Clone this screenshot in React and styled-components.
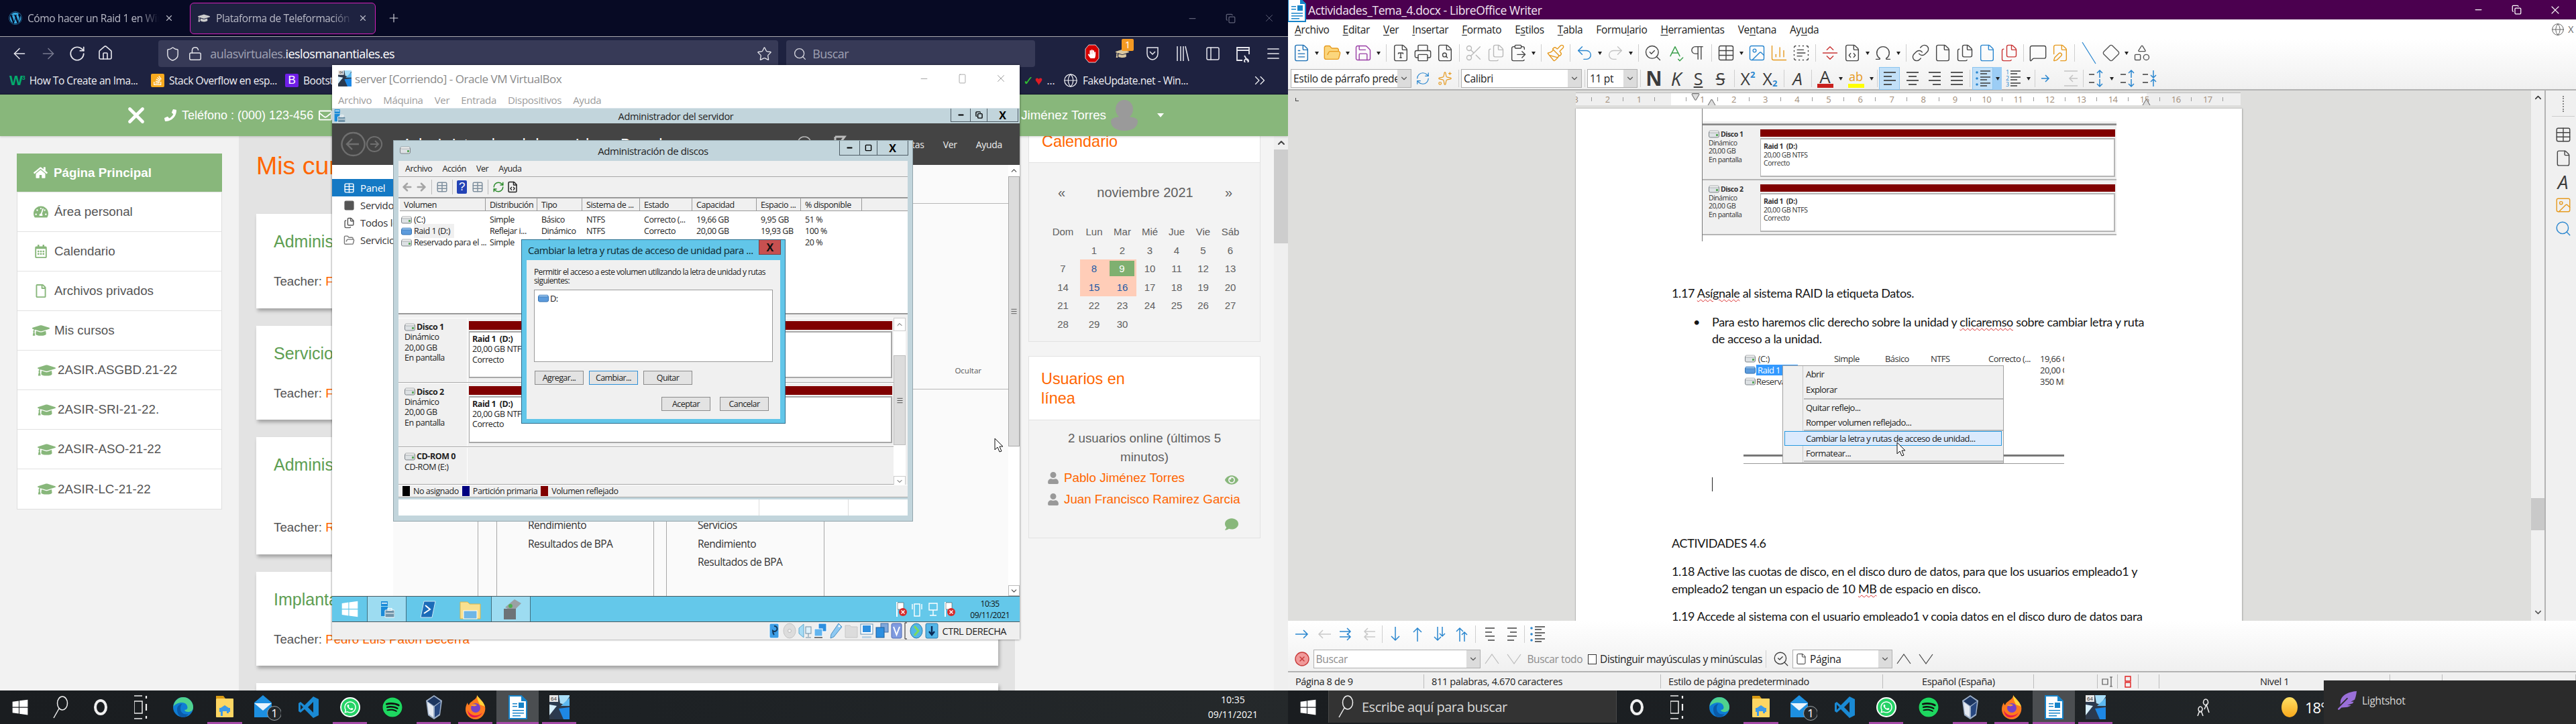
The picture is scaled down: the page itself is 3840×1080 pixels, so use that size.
import React from 'react';
import styled, { createGlobalStyle, css } from 'styled-components';
import {
  ArrowLeft, ArrowRight, RotateCw, Home, Shield, LockOpen, Star, Search, X, Plus, Minus, Square, Copy,
  ChevronsRight, Menu, PanelLeft, Globe, ChevronDown, ChevronUp, FileText, FolderOpen, Save, FileType, Printer,
  FileSearch, Scissors, Files, ClipboardPaste, Paintbrush, Undo2, Redo2, SearchCheck, SpellCheck, Pilcrow,
  Table, Image, ChartColumn, TextSelect, SeparatorHorizontal, FileCode, Omega, Link, File, MessageSquare, FilePen,
  Diamond, Shapes, RefreshCw, Sparkles, XCircle, Triangle,
} from 'lucide-react';
import {
  FaWindows, FaHome, FaTachometerAlt, FaRegCalendarAlt, FaRegFile, FaGraduationCap, FaPhoneAlt, FaRegEnvelope,
  FaUser, FaEye, FaComment, FaWhatsapp, FaSpotify, FaWordpress, FaStackOverflow, FaHandPaper, FaFeatherAlt,
} from 'react-icons/fa';

const UI = `"Open Sans", "Noto Sans", sans-serif`;
const WEB = `"Liberation Sans", Arial, sans-serif`;

const Global = createGlobalStyle`
  html, body { margin: 0; padding: 0; width: 3840px; height: 1080px; overflow: hidden; background: #000; }
  * { box-sizing: border-box; }
  svg { display: block; flex-shrink: 0; }
`;

const Desktop = styled.div`
  display: grid;
  grid-template-columns: 1920px 1920px;
  height: 1080px;
  font-family: ${UI};
`;

const Screen = styled.div`
  position: relative;
  display: flex;
  flex-direction: column;
  height: 1080px;
  overflow: hidden;
`;

/* ---------- Windows taskbar ---------- */

const TaskbarRoot = styled.div`
  height: 50px;
  flex-shrink: 0;
  display: flex;
  align-items: stretch;
  background: linear-gradient(90deg, #1a1d20 0%, #1d2124 50%, #25292b 100%);
  color: #fff;
`;

const TaskSlot = styled.div`
  position: relative;
  width: ${p => p.$w || 60}px;
  display: flex;
  align-items: center;
  justify-content: center;
  background: ${p => (p.$focus ? '#4b4e51' : 'transparent')};
  &::after {
    content: '';
    display: ${p => (p.$open ? 'block' : 'none')};
    position: absolute;
    bottom: 0;
    height: 3px;
    left: ${p => (p.$focus ? 0 : 5)}px;
    right: ${p => (p.$focus ? 0 : 6)}px;
    background: #a54ba8;
  }
`;

const SearchBox = styled.div`
  width: 430px;
  display: flex;
  align-items: center;
  gap: 12px;
  padding-left: 13px;
  margin-bottom: 2px;
  background: #333;
  border: 1px solid #4a4a4a;
  border-width: 0 1px;
  color: #d8d8d8;
  font-size: 20px;
  letter-spacing: -0.5px;
`;

const AppsRow = styled.div`
  display: flex;
  margin-left: 2px;
`;

const Clock = styled.div`
  margin-left: auto;
  margin-right: 45px;
  display: flex;
  flex-direction: column;
  justify-content: center;
  align-items: center;
  gap: 4px;
  font-size: 14px;
  line-height: 18px;
`;

const TaskTray = styled.div`
  display: flex;
  align-items: center;
  font-size: 22px;
  letter-spacing: -1px;
`;

const CircleIcon = styled.span`
  display: flex;
  width: 30px;
  height: 30px;
  border-radius: 50%;
  align-items: center;
  justify-content: center;
  background: ${p => p.$bg};
  border: ${p => p.$ring || 'none'};
  color: ${p => p.$fg};
  font-size: 20px;
`;

const EdgeIcon = () => (
  <svg width="30" height="30" viewBox="0 0 30 30">
    <circle cx="15" cy="15" r="15" fill="#0f7dd4" />
    <path d="M15 0a15 15 0 0 1 15 15c0 5-3.500 7-7.500 7-3 0-5-1-5.500-3 2.500 0 4.500-1 4.500-3.500C21.500 11 18 8 13 8 8 8 3 10.500 .5 14 1.500 6 7.500 0 15 0z" fill="#4fd28e" />
    <path d="M6 18c0-5 4-8 7.500-8-2 2-2.500 4-2.500 7 0 6 5 10 12 8-2.500 3-5 5-8 5-6 0-9-6-9-12z" fill="#0b5aa8" />
  </svg>
);
const FolderIcon = () => (
  <svg width="28" height="34" viewBox="0 0 28 34">
    <path d="M1 0h11l3 4H1z" fill="#d89a14" />
    <rect x="1" y="4" width="26" height="28" rx="1" fill="#fdd663" />
    <path d="M8 18l6-4 6 4v8h-4v-4h-4v8H8z" fill="#3d9ae8" />
    <rect x="6" y="18" width="16" height="6" fill="#3d9ae8" />
    <rect x="11" y="23" width="6" height="9" fill="#fdd663" />
  </svg>
);
const MailIcon = () => (
  <svg width="42" height="40" viewBox="0 0 42 40">
    <path d="M2 13L15 2l13 11v22H2z" fill="#1d8fe0" />
    <path d="M2 14h26L15 25z" fill="#e8f4fd" />
    <circle cx="32" cy="29" r="10.500" fill="#23272a" stroke="#9aa0a4" />
    <text x="32" y="35" textAnchor="middle" fontSize="17" fill="#fff" fontFamily="Open Sans">1</text>
  </svg>
);
const CodeIcon = () => (
  <svg width="30" height="32" viewBox="0 0 30 32">
    <path d="M22 0l8 4v24l-8 4-13-13-6 5-3-2v-12l3-2 6 5z" fill="#1a8ad4" />
    <path d="M22 8l-8 8 8 8z" fill="#1c2024" />
    <path d="M3 12l4 4-4 4z" fill="#1c2024" />
  </svg>
);
const VBoxIcon = () => (
  <svg width="26" height="38" viewBox="0 0 26 38">
    <path d="M13 1l12 8-3 22-9 6-9-6L1 9z" fill="#9fb1c9" />
    <path d="M13 3l10 7-10 7L3 10z" fill="#1d3660" />
    <path d="M3 11l9 7v16l-7-5z" fill="#e4e9f1" />
    <path d="M23 11l-9 7v16l7-5z" fill="#27477f" />
  </svg>
);
const FirefoxIcon = () => (
  <svg width="30" height="36" viewBox="0 0 30 36">
    <path d="M17 0c2 4 9 8 12 17 2 9-5 19-14 19S0 29 0 21c0-3 1-7 3-10 0 2 1 3 2 4 1-4 4-5 6-7 3-2 6-4 6-8z" fill="#ff7a1f" />
    <path d="M17 0c2 4 9 8 12 17l-8-3c-1-3-4-7-4-14z" fill="#ffd43a" />
    <path d="M3 22c3 8 14 12 22 4-3 6-11 9-17 6-3-2-5-6-5-10z" fill="#e5184f" />
    <circle cx="15" cy="19" r="7" fill="#7642c9" />
    <path d="M8 15c3-2 7-2 9 0-2 1-4 2-6 1-1 0-2 0-3-1z" fill="#ff9d2b" />
  </svg>
);
const WriterIcon = () => (
  <svg width="28" height="36" viewBox="0 0 28 36">
    <path d="M1 1h18l8 8v26H1z" fill="#fff" stroke="#1683c9" strokeWidth="2" />
    <path d="M19 0l9 9h-9z" fill="#1683c9" />
    <rect x="6" y="12" width="7" height="1.500" fill="#1683c9" />
    <rect x="6" y="16" width="7" height="1.500" fill="#1683c9" />
    <rect x="15" y="11" width="8" height="8" fill="#1683c9" />
    <rect x="6" y="22" width="17" height="1.500" fill="#1683c9" />
    <rect x="6" y="26" width="17" height="1.500" fill="#1683c9" />
    <rect x="6" y="30" width="12" height="1.500" fill="#1683c9" />
  </svg>
);
const VmIcon = ({ size = 30 }) => (
  <svg width={size} height={size * 1.2} viewBox="0 0 30 36">
    <rect width="30" height="36" fill="#2f3a4a" />
    <path d="M0 10h14l-1 6 8 20H8z" fill="#2b3a4f" />
    <path d="M14 0l2 12 6 2 8-12V0z" fill="#a8def8" />
    <path d="M17 16l13-12v12l-13 0z" fill="#5cb8f0" />
    <path d="M14 20l16-2v18h-9z" fill="#1e88e5" />
    <path d="M0 14l11 2-11 14z" fill="#d7effc" />
    <rect width="13" height="10" fill="#e6e6e6" />
    <text x="6.500" y="8" textAnchor="middle" fontSize="8" fill="#333" fontFamily="Liberation Sans">64</text>
  </svg>
);
const CortanaRing = styled.span`
  width: 20px;
  height: 24px;
  border: 4px solid #f0f0f0;
  border-radius: 50%;
`;
const TaskViewIcon = () => (
  <svg width="20" height="36" viewBox="0 0 20 36" stroke="#f0f0f0" fill="none" strokeWidth="1.500">
    <path d="M0 1h12M0 35h12M0 9h12v18H0z" />
    <path d="M18 1v4M18 13v10M18 31v4" strokeWidth="2.200" />
  </svg>
);
const MagnifierIcon = () => (
  <svg width="24" height="34" viewBox="0 0 24 34" fill="none" stroke="#f0f0f0" strokeWidth="1.500">
    <ellipse cx="15" cy="11" rx="7.500" ry="10" />
    <path d="M10 19L2 33" />
  </svg>
);

const AppSlots = () => {
  const apps = [
    [<EdgeIcon />, false],
    [<FolderIcon />, true],
    [<MailIcon />, false],
    [<CodeIcon />, false],
    [<CircleIcon $bg="#25d366" $fg="#fff" $ring="2px solid #fff"><FaWhatsapp /></CircleIcon>, true],
    [<CircleIcon $bg="#111" $fg="#1ed760"><FaSpotify size={30} /></CircleIcon>, false],
    [<VBoxIcon />, true],
    [<FirefoxIcon />, true],
    [<WriterIcon />, true, true],
    [<VmIcon />, true],
  ];
  return (
    <AppsRow>
      {apps.map(([icon, open, focus], i) => (
        <TaskSlot key={i} $w={62.3} $open={open} $focus={focus}>{icon}</TaskSlot>
      ))}
    </AppsRow>
  );
};

/* ---------- Firefox ---------- */

const Browser = styled.div`
  flex: 1;
  display: flex;
  flex-direction: column;
  min-height: 0;
  background: #1e2240;
`;
const TabBar = styled.div`
  height: 55px;
  display: flex;
  align-items: center;
  background: #070a24;
  border-bottom: 1px solid #a9a9ad;
  flex-shrink: 0;
  color: #b9bac6;
`;
const Tab = styled.div`
  display: flex;
  align-items: center;
  height: 47px;
  width: ${p => (p.$active ? 277 : 270)}px;
  padding-left: ${p => (p.$active ? 10 : 13)}px;
  padding-right: 11px;
  gap: 8px;
  font-size: 15.500px;
  letter-spacing: -0.4px;
  white-space: nowrap;
  ${p => p.$active && css`
    margin-left: 13px;
    background: #1e2240;
    border: 1px solid #d31fba;
    border-radius: 6px;
  `}
`;
const TabLabel = styled.span`
  flex: 1;
  overflow: hidden;
  -webkit-mask-image: linear-gradient(90deg, #000 85%, transparent);
`;
const PlainIcon = styled.span`
  display: flex;
  width: ${p => p.$w || 20}px;
  justify-content: center;
  align-items: center;
  color: ${p => p.$c || 'inherit'};
  flex-shrink: 0;
`;
const NewTab = styled.span`
  margin-left: 17px;
  color: #d4d5dd;
  display: flex;
`;
const WinControls = styled.div`
  margin-left: auto;
  display: flex;
  align-items: center;
  color: ${p => p.$c || '#5f6177'};
`;
const WinControl = styled.span`
  width: 57px;
  display: flex;
  justify-content: center;
`;
const NavBar = styled.div`
  height: 45px;
  padding-top: 5px;
  display: flex;
  align-items: center;
  color: #e8e8ee;
  flex-shrink: 0;
`;
const NavBtns = styled.div`
  display: flex;
  width: 237px;
  padding-left: 16px;
  gap: 17px;
`;
const UrlField = styled.div`
  height: 40px;
  width: ${p => p.$w}px;
  margin-right: 12px;
  background: #373a57;
  border-radius: 4px;
  display: flex;
  align-items: center;
  padding-left: 10px;
  gap: ${p => p.$gap || 10}px;
  font-size: 18px;
  letter-spacing: -0.55px;
  color: #9fa1b3;
`;
const UrlHost = styled.span`
  color: #fff;
`;
const EndIcon = styled.span`
  margin-left: auto;
  margin-right: 9px;
  display: flex;
`;
const FfTools = styled.div`
  display: flex;
  margin-left: 50px;
  gap: 0;
`;
const FfTool = styled.span`
  position: relative;
  width: 45px;
  display: flex;
  justify-content: center;
  align-items: center;
`;
const Badge = styled.span`
  position: absolute;
  top: -8px;
  right: 5px;
  width: 18px;
  height: 18px;
  background: #f59a23;
  color: #fff;
  text-align: center;
  border-radius: 2px;
  font-size: 14px;
  line-height: 18px;
`;
const BookmarksBar = styled.div`
  height: 41px;
  display: flex;
  align-items: center;
  padding-left: 14px;
  color: #f0f0f4;
  font-size: 15.500px;
  letter-spacing: -0.45px;
  flex-shrink: 0;
  border-bottom: 1px solid #10132b;
  white-space: nowrap;
`;
const Bookmark = styled.span`
  display: flex;
  align-items: center;
  gap: 7px;
  width: ${p => p.$w}px;
  flex-shrink: 0;
`;
const W3 = styled.span`
  color: #04aa6d;
  font-family: ${WEB};
  font-weight: 700;
  font-size: 21px;
  letter-spacing: -1px;
`;
const Square20 = styled.span`
  width: 20px;
  height: 20px;
  display: flex;
  align-items: center;
  justify-content: center;
  border-radius: 2px;
  background: ${p => p.$bg};
  color: ${p => p.$fg};
  font-family: ${WEB};
  font-size: 17px;
`;

const WebHeader = styled.div`
  position: relative;
  z-index: 2;
  height: 62px;
  flex-shrink: 0;
  background: #88b77b;
  display: flex;
  align-items: center;
  color: #fff;
  font-family: ${WEB};
  font-size: 18px;
  padding-left: 184px;
  padding-right: 21px;
  box-shadow: 0 1px 3px rgba(0, 0, 0, .18);
`;
const HeaderPhone = styled.span`
  margin-left: 23px;
  display: flex;
  align-items: center;
  gap: 8px;
`;
const HeaderUser = styled.span`
  margin-left: auto;
  display: flex;
  align-items: center;
  font-size: 18.750px;
`;
const Caret = styled.span`
  margin-left: 27px;
  margin-right: 164px;
  border: 5px solid transparent;
  border-top: 6px solid #fff;
  margin-top: 5px;
`;
const Page = styled.div`
  flex: 1;
  min-height: 0;
  display: grid;
  grid-template-columns: 356px 1157px 386px 21px;
  font-family: ${WEB};
  font-size: 18.750px;
`;
const SideCol = styled.div`
  background: #f2f2f2;
  padding: 26px 25px;
`;
const SideList = styled.div`
  width: 306px;
  border: 1px solid #dfdfdf;
  border-top: none;
  background: #fff;
`;
const SideRow = styled.div`
  height: ${p => (p.$active ? 58 : 59)}px;
  display: flex;
  align-items: center;
  gap: ${p => (p.$sub ? 2 : 5)}px;
  padding-left: ${p => (p.$sub ? 28 : 20)}px;
  color: ${p => (p.$active ? '#fff' : '#555')};
  font-weight: ${p => (p.$active ? 700 : 400)};
  background: ${p => (p.$active ? '#88b77b' : '#fff')};
  border-bottom: 1px solid #e2e2e2;
  margin: ${p => (p.$active ? '0 -1px' : '0')};
  &:last-child { border-bottom: none; }
`;
const MainCol = styled.div`
  background: #e3e3e3;
  padding: 21px 25px 0 26px;
  overflow: hidden;
`;
const Heading = styled.h1`
  margin: 0 0 49px;
  font-size: 37.500px;
  line-height: 46px;
  font-weight: 400;
  color: #ff6600;
`;
const CourseCards = styled.div`
  display: flex;
  flex-direction: column;
  gap: 26px;
`;
const Course = styled.div`
  background: #fff;
  padding: 24px 26px 27.500px;
  box-shadow: 2px 4px 5px rgba(0, 0, 0, .28);
  min-height: 140px;
  white-space: nowrap;
`;
const CourseTitle = styled.div`
  font-size: 25px;
  line-height: 34px;
  color: #5e9e52;
`;
const Teacher = styled.div`
  margin-top: ${p => p.$mt || 31}px;
  line-height: 24px;
  color: #555;
`;
const Orange = styled.span`
  color: #ff6600;
`;
const RightCol = styled.div`
  background: #f4f4f4;
  padding-left: 20px;
`;
const Block = styled.div`
  width: 346px;
  border: 1px solid #e2e2e2;
  border-top: ${p => (p.$first ? 'none' : '1px solid #e2e2e2')};
  margin-top: ${p => (p.$first ? 0 : 21)}px;
`;
const BlockHead = styled.div`
  background: #fff;
  height: ${p => p.$h}px;
  padding: ${p => p.$pad};
  font-size: 23.400px;
  line-height: ${p => p.$lh}px;
  color: #ff6600;
  border-bottom: 1px solid #e2e2e2;
`;
const BlockBody = styled.div`
  background: #f3f3f3;
  height: ${p => p.$h}px;
  color: #606060;
`;
const MonthRow = styled.div`
  height: 89px;
  display: flex;
  align-items: center;
  justify-content: space-between;
  padding: 0 41px 0 43px;
  font-size: 20px;
`;
const CalGrid = styled.div`
  margin-left: 25px;
  display: grid;
  grid-template-columns: 51px 42px 42px 40px 40px 39px 42px;
  grid-auto-rows: 27.500px;
  font-size: 15px;
  text-align: center;
`;
const DayCell = styled.div`
  display: flex;
  align-items: center;
  justify-content: center;
  background: ${p => (p.$event ? '#ffcdb8' : 'transparent')};
  color: ${p => (p.$event ? '#1d5aa6' : 'inherit')};
`;
const Today = styled.span`
  width: 37px;
  height: 23px;
  margin-left: -1px;
  margin-top: -1px;
  background: #7fb070;
  color: #fff;
  line-height: 23px;
`;
const OnlineText = styled.div`
  width: 300px;
  margin: 0 auto;
  padding-top: 13px;
  line-height: 28px;
  text-align: center;
`;
const UserRows = styled.div`
  margin-top: 1px;
  padding-left: 27px;
  padding-right: 32px;
`;
const UserRow = styled.div`
  height: 32px;
  display: flex;
  align-items: center;
  gap: 7px;
  color: #ff6600;
  white-space: nowrap;
`;
const RowEnd = styled.span`
  margin-left: auto;
  margin-top: 6px;
  color: #88b77b;
  display: flex;
`;
const ChatLine = styled.div`
  display: flex;
  justify-content: flex-end;
  margin-top: 11px;
  color: #88b77b;
`;
const PageScroll = styled.div`
  background: #efefef;
  display: flex;
  flex-direction: column;
  align-items: center;
`;
const PageThumb = styled.div`
  width: 100%;
  height: 140px;
  margin-top: 0;
  background: #cdcdcd;
`;
const ArrowBox = styled.div`
  height: ${p => p.$h || 18}px;
  width: 100%;
  background: ${p => p.$bg || '#fff'};
  border: ${p => p.$b || 'none'};
  display: flex;
  align-items: center;
  justify-content: center;
  color: ${p => p.$c || '#444'};
  flex-shrink: 0;
`;

/* ---------- VirtualBox window ---------- */

const VBoxWindow = styled.div`
  position: absolute;
  z-index: 3;
  left: 495px;
  top: 97px;
  width: 1025px;
  height: 857px;
  background: #fff;
  display: flex;
  flex-direction: column;
  box-shadow: 0 0 3px rgba(0, 0, 0, .55);
`;
const VBoxTitle = styled.div`
  height: 40px;
  display: flex;
  align-items: center;
  padding-left: 9px;
  gap: 5px;
  color: #8a8a8a;
  font-size: 17px;
  letter-spacing: -0.45px;
  flex-shrink: 0;
`;
const VBoxMenu = styled.div`
  height: 24px;
  display: flex;
  align-items: center;
  padding-left: 9px;
  gap: 17px;
  color: #9c9c9c;
  font-size: 15px;
  letter-spacing: -0.3px;
  flex-shrink: 0;
`;
const VmScreen = styled.div`
  position: relative;
  height: 767px;
  display: flex;
  flex-direction: column;
  background: #fff;
  flex-shrink: 0;
`;
const SmTitle = styled.div`
  position: relative;
  height: 23px;
  background: #c2d5dc;
  display: flex;
  align-items: center;
  justify-content: center;
  font-size: 14.500px;
  letter-spacing: -0.35px;
  color: #222;
  flex-shrink: 0;
  border-top: 1px solid #dbe6ea;
`;
const TitleIcon = styled.span`
  position: absolute;
  left: 2px;
  top: 0;
`;
const ChromeButtons = styled.div`
  position: absolute;
  top: 0;
  right: ${p => p.$r}px;
  display: flex;
  height: ${p => p.$h}px;
  background: #c2d5dc;
  border: 1px solid #4f5d66;
  border-top: none;
`;
const ChromeButton = styled.span`
  width: ${p => p.$w}px;
  display: flex;
  align-items: center;
  justify-content: center;
  color: #000;
  font-weight: 700;
  font-size: 16px;
  border-left: ${p => (p.$first ? 'none' : '1px solid #4f5d66')};
`;
const SmDark = styled.div`
  height: 62px;
  background: #444;
  display: flex;
  align-items: center;
  color: #ececec;
  font-size: 14px;
  letter-spacing: -0.3px;
  padding-left: 13px;
  flex-shrink: 0;
`;
const Crumb = styled.span`
  margin-left: 28px;
  font-size: 25px;
  color: #fff;
  white-space: nowrap;
`;
const SmMenuEnd = styled.span`
  margin-left: auto;
  display: flex;
  align-items: center;
  gap: 28px;
  padding-right: 26px;
`;
const SmBody = styled.div`
  flex: 1;
  min-height: 0;
  display: flex;
  font-size: 15px;
  color: #333;
`;
const SmSide = styled.div`
  width: 91px;
  padding-top: 21px;
  flex-shrink: 0;
  overflow: hidden;
  letter-spacing: -0.3px;
`;
const SmSideRow = styled.div`
  height: 26px;
  display: flex;
  align-items: center;
  gap: 8px;
  padding-left: 17px;
  white-space: nowrap;
  background: ${p => (p.$active ? '#1479c4' : 'transparent')};
  color: ${p => (p.$active ? '#fff' : '#333')};
`;
const SmMain = styled.div`
  flex: 1;
  background: #fafafa;
  display: flex;
  flex-direction: column;
`;
const QuickStart = styled.div`
  margin-top: 57px;
  height: 278px;
  border-top: 1px solid #b8b8b8;
  border-bottom: 1px solid #b8b8b8;
  display: flex;
  align-items: flex-end;
  justify-content: flex-end;
  padding: 0 40px 20px 0;
  font-size: 11.500px;
  color: #555;
`;
const TileRow = styled.div`
  flex: 1;
  display: flex;
  padding-left: 126px;
  margin-top: 10px;
`;
const TileGutter = styled.div`
  width: 28px;
  border-left: 1px solid #a8a8a8;
`;
const Tile = styled.div`
  width: ${p => p.$w}px;
  margin-right: 18px;
  border: 1px solid #a8a8a8;
  border-width: 0 1px;
  padding: 179px 0 0 46px;
  line-height: 27.700px;
  letter-spacing: -0.5px;
  color: #333;
  font-size: 15.500px;
`;
const SmScroll = styled.div`
  width: 17px;
  display: flex;
  flex-direction: column;
  flex-shrink: 0;
  background: #fff;
`;
const SmThumb = styled.div`
  height: 403px;
  background: #dcdcdc;
  border: 1px solid #a8a8a8;
  margin-bottom: auto;
  display: flex;
  align-items: center;
  justify-content: center;
  color: #555;
`;
const VmTaskbar = styled.div`
  height: 39px;
  background: #64c8ea;
  border-top: 1px solid #4a5a60;
  border-bottom: 1px solid #4a5a60;
  display: flex;
  align-items: stretch;
  flex-shrink: 0;
  color: #111;
`;
const VmSlot = styled.div`
  width: ${p => p.$w}px;
  display: flex;
  align-items: center;
  justify-content: center;
  background: ${p => (p.$on ? '#9ddcf1' : 'transparent')};
  border: ${p => (p.$on ? '1px solid #3f6f80' : 'none')};
  border-width: 0 1px;
  color: #fff;
  font-size: 27px;
`;
const VmTray = styled.div`
  margin-left: auto;
  display: flex;
  align-items: center;
  gap: 6px;
  padding-right: 15px;
`;
const VmClock = styled.div`
  margin-left: 16px;
  display: flex;
  flex-direction: column;
  align-items: center;
  font-size: 12px;
  line-height: 17px;
  letter-spacing: -0.5px;
`;
const VBoxStatus = styled.div`
  flex: 1;
  background: #efefef;
  display: flex;
  align-items: center;
  justify-content: flex-end;
  gap: 3px;
  padding-right: 20px;
  font-size: 14.500px;
  letter-spacing: -0.55px;
  color: #222;
`;
const StatusText = styled.span`
  margin-left: 3px;
`;

/* ---------- Disk management ---------- */

const DiskWindow = styled.div`
  position: absolute;
  left: 91px;
  top: 48px;
  width: 775px;
  height: 569px;
  background: #c2d5dc;
  padding: 0 7px 8px;
  display: flex;
  flex-direction: column;
  border: 1px solid #93a6ad;
  font-size: 12.500px;
  letter-spacing: -0.45px;
  color: #222;
`;
const DiskTitle = styled.div`
  position: relative;
  height: 30px;
  flex-shrink: 0;
  display: flex;
  align-items: center;
  justify-content: center;
  font-size: 15px;
  letter-spacing: -0.4px;
`;
const DiskMenu = styled.div`
  height: 24px;
  flex-shrink: 0;
  display: flex;
  align-items: center;
  gap: 15px;
  padding-left: 10px;
  background: #f0f0f0;
  border-bottom: 1px solid #a8a8a8;
`;
const DiskTools = styled.div`
  height: 30px;
  flex-shrink: 0;
  display: flex;
  align-items: center;
  padding-left: 4px;
  gap: 3px;
  background: #f0f0f0;
`;
const ToolSep = styled.span`
  width: 1px;
  height: 22px;
  margin: 0 3px;
  background: #bbb;
`;
const VolumeList = styled.div`
  height: 175px;
  flex-shrink: 0;
  background: #fff;
  padding-left: 2px;
  border-top: 2px solid #999;
  border-bottom: 2px solid #999;
`;
const VolumeGrid = styled.div`
  display: grid;
  grid-template-columns: 128px 77px 67px 86px 78px 96px 66px 91px 1fr;
  height: ${p => p.$h}px;
  align-items: center;
  white-space: nowrap;
  ${p => p.$head && css`
    background: #f0f0f0;
    border-bottom: 1px solid #999;
    margin-bottom: 2px;
  `}
`;
const VolHead = styled.span`
  height: 100%;
  padding-left: 6px;
  display: flex;
  align-items: center;
  border-right: 1px solid #999;
`;
const VolCell = styled.span`
  padding-left: ${p => (p.$first ? 2 : 6)}px;
  display: flex;
  align-items: center;
  gap: ${p => (p.$first ? 3 : 0)}px;
`;
const VolName = styled.span`
  background: ${p => (p.$sel ? '#f0f0f0' : 'transparent')};
  padding: 2px 6px 2px 0;
`;
const DiskStack = styled.div`
  flex: 1;
  min-height: 0;
  display: flex;
  background: #f0f0f0;
  padding-top: 5px;
`;
const DiskRows = styled.div`
  flex: 1;
  display: flex;
  flex-direction: column;
`;
const DiskRowWrap = styled.div`
  height: ${p => p.$h}px;
  display: flex;
  border-bottom: 1px solid #a8a8a8;
  border-top: 1px solid #fff;
`;
const DiskLabel = styled.div`
  width: 103px;
  flex-shrink: 0;
  padding: 5px 0 0 9px;
  line-height: 15.300px;
  border-right: 1px solid #fff;
`;
const DiskName = styled.div`
  display: flex;
  align-items: center;
  gap: 2px;
  font-weight: 700;
`;
const DiskParts = styled.div`
  flex: 1;
  padding: 4px 2px 0 2px;
`;
const RedBar = styled.div`
  height: ${p => p.$h || 13}px;
  background: #800000;
`;
const PartBox = styled.div`
  height: ${p => p.$h || 70}px;
  margin-top: 2px;
  background: #fff;
  border: 1px solid #a8a8a8;
  border-width: 2px 2px 2px 1px;
  padding: 2px 4px;
  line-height: 15.300px;
`;
const Bold = styled.div`
  font-weight: 700;
`;
const DiskScroll = styled.div`
  width: 18px;
  display: flex;
  flex-direction: column;
  background: #fff;
  margin-right: 3px;
`;
const LegendBar = styled.div`
  height: 19px;
  flex-shrink: 0;
  display: flex;
  align-items: center;
  gap: 5px;
  padding-left: 6px;
  background: #f0f0f0;
  border-top: 1px solid #fff;
  border-bottom: 1px solid #a8a8a8;
`;
const Swatch = styled.span`
  width: 11px;
  height: 15px;
  background: ${p => p.$c};
`;
const DiskStatusBar = styled.div`
  height: 24px;
  flex-shrink: 0;
  margin-top: 3px;
  display: grid;
  grid-template-columns: 538px 133px 1fr;
  background: #fff;
`;
const DiskStatusCell = styled.span`
  border-right: 1px solid #ddd;
`;

/* ---------- Dialog ---------- */

const Dialog = styled.div`
  position: absolute;
  left: 190px;
  top: 147px;
  width: 394px;
  height: 275px;
  background: #62c6e9;
  border: 1px solid #2d6f8f;
  padding: 0 7px 7px;
  display: flex;
  flex-direction: column;
  font-size: 12px;
  letter-spacing: -0.6px;
`;
const DialogTitle = styled.div`
  position: relative;
  height: 30px;
  flex-shrink: 0;
  display: flex;
  align-items: center;
  padding-left: 2px;
  font-size: 15px;
  letter-spacing: -0.48px;
  color: #10282f;
  white-space: nowrap;
`;
const DialogClose = styled.span`
  position: absolute;
  right: -1px;
  top: 0;
  width: 33px;
  height: 22px;
  background: #c75050;
  border: 1px solid #75454a;
  border-top: none;
  display: flex;
  align-items: center;
  justify-content: center;
  font-size: 16px;
  font-weight: 700;
  color: #111;
`;
const DialogBody = styled.div`
  flex: 1;
  background: #f0f0f0;
  padding: 11px 11px 12px;
  display: flex;
  flex-direction: column;
  line-height: 13px;
`;
const DialogList = styled.div`
  height: 108px;
  margin-top: 7px;
  background: #fff;
  border: 1px solid #9a9a9a;
  padding: 6px 5px;
  display: flex;
  align-items: flex-start;
  gap: 2px;
  font-size: 13px;
`;
const DialogButtons = styled.div`
  display: flex;
  gap: 8px;
  margin-top: ${p => p.$mt}px;
  justify-content: ${p => (p.$end ? 'flex-end' : 'flex-start')};
  padding: 0 ${p => (p.$end ? 6 : 0)}px 0 ${p => (p.$end ? 0 : 1)}px;
  ${p => p.$end && css`gap: 14px;`}
`;
const WinButton = styled.span`
  width: 73px;
  height: 21px;
  background: #e3e3e3;
  border: 1px solid ${p => (p.$focus ? '#2e8fd6' : '#8c8c8c')};
  display: flex;
  align-items: center;
  justify-content: center;
  font-size: 12.500px;
`;

/* ---------- Writer ---------- */

const Writer = styled.div`
  flex: 1;
  min-height: 0;
  display: flex;
  flex-direction: column;
  background: #fff;
`;
const WriterTitle = styled.div`
  height: 29px;
  flex-shrink: 0;
  background: #4b004f;
  color: #f2e6f2;
  display: flex;
  align-items: center;
  padding-left: 6px;
  gap: 6px;
  font-size: 17.500px;
  letter-spacing: -0.4px;
`;
const WriterMenu = styled.div`
  height: 29px;
  flex-shrink: 0;
  display: flex;
  align-items: center;
  padding-left: 10px;
  gap: 20px;
  font-size: 15.500px;
  letter-spacing: -0.35px;
  color: #1c1c1c;
`;
const Mnemonic = styled.span`
  text-decoration: underline;
  text-underline-offset: 2px;
`;
const MenuEnd = styled.span`
  margin-left: auto;
  margin-right: 4px;
  display: flex;
  gap: 5px;
  align-items: center;
  color: #666;
  font-size: 14px;
`;
const ToolbarBlock = styled.div`
  flex-shrink: 0;
  background: linear-gradient(#fff, #f0f0f0);
  border-bottom: 2px solid #b3b3b3;
`;
const ToolRow = styled.div`
  height: ${p => p.$h}px;
  display: flex;
  align-items: center;
  padding-left: ${p => p.$pad || 0}px;
`;
const Btn = styled.span`
  width: ${p => p.$w || 33}px;
  height: 34px;
  margin-left: ${p => p.$ml || 0}px;
  display: flex;
  align-items: center;
  justify-content: center;
  flex-shrink: 0;
  color: ${p => p.$c || '#3b3b3b'};
  ${p => p.$on && css`
    background: #c2e0f8;
    outline: 1px solid #8cc4ef;
    outline-offset: -1px;
  `}
`;
const Drop = styled.span`
  width: 13px;
  height: 34px;
  flex-shrink: 0;
  display: flex;
  align-items: center;
  justify-content: center;
  background: ${p => (p.$on ? '#9ccdf5' : 'transparent')};
  &::before {
    content: '';
    border: 3.500px solid transparent;
    border-top: 5px solid #222;
    margin-top: 4px;
  }
`;
const TSep = styled.span`
  width: ${p => p.$w || 10}px;
  height: 26px;
  flex-shrink: 0;
  display: flex;
  justify-content: center;
  &::before { content: ''; width: 1px; background: #cfcfcf; }
`;
const Combo = styled.span`
  width: ${p => p.$w}px;
  height: 28px;
  flex-shrink: 0;
  display: flex;
  align-items: center;
  background: #fff;
  border: 1.500px solid #b0b0b0;
  font-size: 15.500px;
  letter-spacing: -0.3px;
  padding-left: 3px;
  color: #222;
  overflow: hidden;
  white-space: nowrap;
`;
const ComboText = styled.span`
  flex: 1;
  overflow: hidden;
  display: flex;
  align-items: center;
  gap: 4px;
  color: ${p => p.$c || 'inherit'};
`;
const ComboArrow = styled.span`
  width: 20px;
  height: 100%;
  background: #dcdcdc;
  display: flex;
  align-items: center;
  justify-content: center;
  color: #555;
  flex-shrink: 0;
`;
const FormatLetter = styled.span`
  font-size: ${p => p.$s || 27}px;
  line-height: 30px;
  font-weight: ${p => p.$w || 400};
  font-style: ${p => (p.$i ? 'italic' : 'normal')};
  text-decoration: ${p => p.$d || 'none'};
  text-decoration-thickness: 1.500px;
  text-underline-offset: 2px;
  color: #3b3b3b;
`;
const Script = styled.span`
  color: #2a86cf;
  font-size: 13px;
  font-weight: 700;
  margin-top: ${p => (p.$up ? -12 : 14)}px;
`;
const ColorA = styled.span`
  position: relative;
  display: flex;
  flex-direction: column;
  align-items: center;
  font-size: ${p => p.$s || 22}px;
  line-height: 22px;
  color: ${p => p.$fg || '#3b3b3b'};
`;
const ColorBar = styled.span`
  width: 24px;
  height: 6px;
  background: ${p => p.$c};
`;
const DocArea = styled.div`
  flex: 1;
  min-height: 0;
  display: flex;
  background: #dededc;
`;
const DocScrollPane = styled.div`
  flex: 1;
  min-width: 0;
  padding-left: 429px;
  position: relative;
  overflow: hidden;
`;
const TabMark = styled.span`
  position: absolute;
  left: 11px;
  top: 11px;
  width: 5px;
  height: 5px;
  border-left: 1.500px solid #444;
  border-bottom: 1.500px solid #444;
`;
const Ruler = styled.div`
  position: relative;
  width: 991px;
  height: 19px;
  margin-top: 3px;
  display: flex;
  overflow: hidden;
  background: linear-gradient(90deg, #efefef 142px, #fff 142px, #fff 851px, #efefef 851px);
  border: 1px solid #bbb;
  border-width: 1px 0;
  border-bottom: none;
`;
const RulerCell = styled.span`
  position: relative;
  width: 47.100px;
  margin-left: ${p => (p.$first ? -23.550 : 0)}px;
  flex-shrink: 0;
  text-align: center;
  font-size: 13px;
  line-height: 18px;
  color: #a08c78;
  letter-spacing: -0.5px;
  &::after {
    content: '';
    position: absolute;
    right: 0;
    top: 6px;
    width: 1px;
    height: 6px;
    background: #999;
  }
`;
const RulerMark = styled.span`
  position: absolute;
  left: ${p => p.$x}px;
  top: ${p => p.$y}px;
  color: #777;
  display: flex;
`;
const DocPage = styled.div`
  width: 993px;
  margin-top: 5px;
  height: 765px;
  background: #fff;
  padding-left: 143px;
  box-shadow: 1px 0 2px rgba(0, 0, 0, .25), -1px 0 1px rgba(0, 0, 0, .15);
  font-family: Lato, ${UI};
  font-size: 18px;
  line-height: 25.500px;
  color: #151515;
  overflow: hidden;
  letter-spacing: -0.35px;
`;
const FigureOne = styled.div`
  width: 618px;
  height: 198px;
  margin-left: 45px;
  border-left: 1px solid #777;
  padding-top: 22px;
  font-family: ${UI};
  font-size: 10.500px;
  line-height: 12.500px;
  letter-spacing: -0.45px;
  color: #333;
`;
const FigLine = styled.div`
  height: 3px;
  background: #888;
  border-top: 1px solid #aaa;
  box-shadow: 0 -3px 0 #f1f1f1;
`;
const FigRow = styled.div`
  height: 82px;
  display: flex;
  background: #f0f0f0;
  border-bottom: 2px solid #b5b5b5;
  padding-top: 4px;
`;
const FigLabel = styled.div`
  width: 85px;
  flex-shrink: 0;
  padding: 3px 0 0 9px;
`;
const FigParts = styled.div`
  flex: 1;
  padding: 2px 2px 0 1px;
`;
const FigPart = styled.div`
  height: 58px;
  margin-top: 2px;
  background: #fff;
  border: 2px solid #b5b5b5;
  border-left-width: 1px;
  padding: 4px 4px;
`;
const Para = styled.p`
  margin: ${p => p.$mt || 0}px 0 0;
  white-space: nowrap;
`;
const BulletPara = styled.div`
  margin-top: 17px;
  padding-left: 60px;
  position: relative;
  white-space: nowrap;
  &::before {
    content: '•';
    position: absolute;
    left: 32px;
    top: 0;
  }
`;
const Misspelled = styled.span`
  text-decoration: underline wavy #d92b2b 1px;
  text-underline-offset: 2px;
`;
const FigureTwo = styled.div`
  position: relative;
  width: 478px;
  height: 165px;
  margin: 8px 0 0 107px;
  font-family: ${UI};
  font-size: 13px;
  line-height: 17px;
  letter-spacing: -0.55px;
  color: #333;
  overflow: hidden;
`;
const FigVolRow = styled.div`
  height: 17px;
  display: grid;
  grid-template-columns: 135px 76px 68px 86px 77px 1fr;
  white-space: nowrap;
  align-items: center;
`;
const FigVolName = styled.span`
  display: flex;
  align-items: center;
  gap: 1px;
  padding-left: 2px;
`;
const SelName = styled.span`
  background: #3399ff;
  color: #fff;
  width: 62px;
  height: 16px;
  line-height: 16px;
  padding-left: 2px;
`;
const FigBottomLine = styled.div`
  position: absolute;
  left: 0;
  right: 0;
  bottom: 0;
  height: 20px;
  border-bottom: 1.500px solid #999;
  &::before {
    content: '';
    display: block;
    height: 3px;
    margin-top: 6px;
    background: #777;
  }
`;
const ContextMenu = styled.div`
  position: absolute;
  left: 58px;
  top: 18px;
  width: 330px;
  height: 146px;
  background: #f0f0f0;
  border: 1px solid #a0a0a0;
  padding-left: 2px;
  z-index: 2;
  font-size: 13px;
  color: #222;
`;
const ContextGutter = styled.span`
  position: absolute;
  left: 29px;
  top: 0;
  bottom: 0;
  border-left: 1px solid #c9c9c9;
`;
const ContextItem = styled.div`
  height: ${p => p.$h || 22}px;
  line-height: ${p => p.$h || 22}px;
  padding-left: 32px;
  ${p => p.$on && css`
    background: #dbeafd;
    border: 1px solid #2699e0;
    margin-right: 2px;
    line-height: 20px;
    padding-left: 31px;
    position: relative;
  `}
`;
const ContextSep = styled.div`
  height: 2px;
  margin: ${p => p.$m || '0'};
  margin-left: 29px;
  background: #b9b9b9;
  position: relative;
`;
const DocCaret = styled.div`
  width: 1px;
  height: 21px;
  margin: 20px 0 0 60px;
  background: #222;
`;
const CursorMark = styled.span`
  position: absolute;
  left: ${p => p.$x}px;
  top: ${p => p.$y}px;
  z-index: 3;
`;
const DocScrollbar = styled.div`
  width: 20px;
  flex-shrink: 0;
  background: #f0f0f0;
  display: flex;
  flex-direction: column;
  align-items: center;
  padding-top: 3px;
`;
const DocThumb = styled.div`
  width: 100%;
  height: 48px;
  margin-top: 590px;
  background: #c9c9c9;
`;
const SidePanel = styled.div`
  width: 47px;
  flex-shrink: 0;
  background: #f0f0f0;
  border-left: 2px solid #b3b3b3;
  display: flex;
  flex-direction: column;
  align-items: center;
  padding: 8px 0 0 6px;
`;
const PanelDots = styled.span`
  height: 24px;
  width: 3px;
  border-left: 2px dotted #888;
  margin-left: 2px;
`;
const PanelDivider = styled.span`
  width: 34px;
  height: 1px;
  background: #ccc;
  margin: 6px 0 9px;
`;
const PanelIcon = styled.span`
  height: 35px;
  display: flex;
  align-items: center;
  color: ${p => p.$c || '#444'};
`;
const StatusBar = styled.div`
  height: 27px;
  flex-shrink: 0;
  display: grid;
  grid-template-columns: 203px 353px 331px 225px 95px 30px 31px 31px 344px 78px 1fr;
  background: #f0f0f0;
  font-size: 14.500px;
  letter-spacing: -0.35px;
  color: #222;
`;
const StatusCell = styled.span`
  display: flex;
  align-items: center;
  justify-content: ${p => (p.$center ? 'center' : 'flex-start')};
  padding-left: ${p => (p.$center ? 0 : p.$pad || 11)}px;
  border-right: 1px solid #bcbcbc;
  margin: 3px 0;
  white-space: nowrap;
`;
const GreyLabel = styled.span`
  color: #8c8c8c;
  font-size: 15.500px;
  letter-spacing: -0.4px;
  margin: 0 8px 0 3px;
`;
const CheckLabel = styled.span`
  display: flex;
  align-items: center;
  gap: 5px;
  font-size: 15.500px;
  letter-spacing: -0.4px;
  color: #222;
`;
const CheckBox = styled.span`
  width: 13px;
  height: 15px;
  border: 1px solid #333;
  background: #fff;
`;
const Lightshot = styled.div`
  position: absolute;
  right: 0;
  bottom: 0;
  width: 376px;
  height: 65px;
  background: #2b2b2b;
  z-index: 5;
  display: flex;
  align-items: center;
  padding: 0 0 6px 21px;
  gap: 8px;
  color: #d8d8d8;
  font-size: 15.500px;
  letter-spacing: -0.3px;
`;

/* ---------- small drawings ---------- */

const DriveIcon = ({ blue }) => (
  <svg width="16" height="12" viewBox="0 0 16 12">
    <rect x=".5" y="2" width="15" height="9" rx="2" fill={blue ? '#5c9bdc' : '#dde1e4'} stroke={blue ? '#2f6eb0' : '#7d8388'} />
    <rect x="1" y="1" width="14" height="3" rx="1.500" fill={blue ? '#8fbde9' : '#f3f3f3'} stroke={blue ? '#2f6eb0' : '#7d8388'} strokeWidth=".6" />
    {!blue && <rect x="11" y="6" width="3" height="3" fill="#5aa85a" />}
  </svg>
);
const ServerToolboxIcon = ({ w = 22, h = 26 }) => (
  <svg width={w} height={h} viewBox="0 0 22 26">
    <rect x="2" y="1" width="10" height="7" fill="#1a8ad8" />
    <rect x="2" y="9" width="10" height="14" fill="#1a8ad8" />
    <rect x="3" y="3" width="8" height="1.500" fill="#fff" />
    <rect x="8" y="14" width="14" height="11" rx="1" fill="#6f93a8" stroke="#fff" />
    <rect x="12" y="11.500" width="6" height="3" fill="none" stroke="#fff" />
    <path d="M9 19h12" stroke="#fff" />
  </svg>
);
const HandIcon = () => (
  <svg width="22" height="28" viewBox="0 0 22 28">
    <polygon points="6,1 16,1 21,7 21,21 16,27 6,27 1,21 1,7" fill="#d40000" stroke="#fff" strokeWidth=".8" />
  </svg>
);
const HandStop = styled.span`
  position: relative;
  display: flex;
  align-items: center;
  justify-content: center;
  color: #fff;
`;
const HandOver = styled.span`
  position: absolute;
  display: flex;
`;
const Cursor = ({ s = 1 }) => (
  <svg width={14 * s} height={22 * s} viewBox="0 0 14 22">
    <path d="M1 1v17l4-4 3 7 3-1-3-7h5z" fill="#fff" stroke="#111" strokeWidth="1" />
  </svg>
);
const Lines = ({ rows, color = '#3b3b3b', w = 18 }) => (
  <svg width={w} height={24} viewBox={`0 0 ${w} 24`} stroke={color} strokeWidth="1.700">
    {rows.map(([x1, x2], i) => <path key={i} d={`M${x1} ${3 + i * (18 / (rows.length - 1))}H${x2}`} />)}
  </svg>
);
const ListIcon = ({ numbered }) => (
  <svg width="22" height="26" viewBox="0 0 22 26">
    {[4, 13, 22].map((y, i) => (
      <g key={y}>
        {numbered
          ? <text x="0" y={y + 3} fontSize="9" fill="#2a86cf" fontFamily="Open Sans">{i + 1}</text>
          : <circle cx="2" cy={y} r="1.800" fill="#2a86cf" />}
        <path d={`M7 ${y - 2}H22M7 ${y + 2}H17`} stroke="#3b3b3b" strokeWidth="1.400" />
      </g>
    ))}
  </svg>
);
const ArrowLines = ({ dir }) => (
  <svg width="24" height="26" viewBox="0 0 24 26" fill="none" stroke="#2a86cf" strokeWidth="1.500">
    <path d="M1 7h8M1 19h8" stroke="#3b3b3b" />
    {dir === 'spread'
      ? <path d="M17 12V1M13 5l4-4 4 4M17 14v11M13 21l4 4 4-4" />
      : <path d="M17 1v11M13 8l4 4 4-4M17 25V14M13 18l4-4 4 4" />}
  </svg>
);
const BlueArrow = ({ d, c = '#2a86cf' }) => (
  <svg width="22" height="24" viewBox="0 0 22 24" fill="none" stroke={c} strokeWidth="1.500"><path d={d} /></svg>
);
const Hairline = ({ d, c = '#777', w = 22, h = 24, sw = 1.200 }) => (
  <svg width={w} height={h} viewBox={`0 0 ${w} ${h}`} fill="none" stroke={c} strokeWidth={sw}><path d={d} /></svg>
);
const TrayFlag = () => (
  <svg width="18" height="24" viewBox="0 0 18 24">
    <path d="M3 1v22" stroke="#fff" strokeWidth="2" />
    <path d="M4 2h9v10H4z" fill="#fff" stroke="#333" strokeWidth=".5" />
    <circle cx="12" cy="16" r="6" fill="#d62b2b" />
    <path d="M9.500 13.500l5 5M14.500 13.500l-5 5" stroke="#fff" strokeWidth="1.400" />
  </svg>
);
const VBoxStatusIcons = () => (
  <>
    <svg width="20" height="24" viewBox="0 0 20 24"><rect x="3" y="1" width="14" height="22" rx="2" fill="#3d9ee6" stroke="#fff" /><path d="M10 5a4 4 0 1 1-2 7c0 3 1 5 2 6" fill="none" stroke="#12395c" strokeWidth="2" /></svg>
    <svg width="20" height="24" viewBox="0 0 20 24"><ellipse cx="10" cy="12" rx="9" ry="11" fill="#dcdcdc" stroke="#c4c4c4" /><circle cx="10" cy="12" r="2.500" fill="#f2f2f2" stroke="#bbb" /></svg>
    <svg width="20" height="24" viewBox="0 0 20 24"><path d="M1 8l7-6v20L1 16z" fill="#a7dcf5" stroke="#5fa9d1" /><rect x="11" y="6" width="8" height="10" fill="#dff1fb" stroke="#6e8ea3" /><path d="M15 16v5M11 22h8" stroke="#6e8ea3" /></svg>
    <svg width="20" height="24" viewBox="0 0 20 24"><rect x="7" y="1" width="12" height="12" fill="#2d8fe0" stroke="#fff" /><rect x="1" y="9" width="12" height="11" fill="#63b5ef" stroke="#fff" /><path d="M1 22h12" stroke="#777" strokeWidth="2" /></svg>
    <svg width="20" height="24" viewBox="0 0 20 24"><path d="M14 1l5 5-12 15-5 2 1-6z" fill="#8ec9f2" stroke="#4a8fc2" /><circle cx="15" cy="5" r="1.500" fill="#fff" /></svg>
    <svg width="20" height="24" viewBox="0 0 20 24"><path d="M1 4h7l2 2h9v16H1z" fill="#dcdcdc" stroke="#c6c6c6" /></svg>
    <svg width="20" height="24" viewBox="0 0 20 24"><rect x="1" y="2" width="18" height="15" fill="#fff" stroke="#5d8fb5" /><rect x="4" y="4" width="12" height="10" fill="#2d8fe0" /><path d="M3 20h14v3H3z" fill="#bcd3e4" /></svg>
    <svg width="20" height="24" viewBox="0 0 20 24"><rect x="8" y="1" width="11" height="13" fill="#7fa8dc" stroke="#3f6fa8" /><rect x="1" y="7" width="12" height="15" fill="#2d8fe0" stroke="#1f5f9c" /></svg>
    <svg width="17" height="24" viewBox="0 0 17 24"><rect x="1" y="1" width="15" height="22" rx="2" fill="#7f9be0" stroke="#4f6bb5" /><path d="M4 6l4.500 12L13 6" fill="none" stroke="#fff" strokeWidth="2" /></svg>
    <svg width="5" height="26" viewBox="0 0 5 26"><path d="M1 1v24M1 1h3M1 25h3" stroke="#222" fill="none" /></svg>
    <svg width="20" height="24" viewBox="0 0 20 24"><ellipse cx="10" cy="12" rx="9" ry="11" fill="#54b6e8" stroke="#2a7dac" /><path d="M7 5l6 7-6 7" fill="none" stroke="#7ddb5c" strokeWidth="3" /></svg>
    <svg width="20" height="24" viewBox="0 0 20 24"><rect x="1" y="1" width="18" height="22" rx="2" fill="#54b6e8" stroke="#2a7dac" /><path d="M10 5v12M6 13l4 5 4-5" fill="none" stroke="#0b2a55" strokeWidth="2.400" /></svg>
  </>
);

const Sp = Array.from({ length: 22 }, (_, i) => Math.abs(i - 3));
const months = [
  ['', 1, 2, 3, 4, 5, 6],
  [7, 8, 9, 10, 11, 12, 13],
  [14, 15, 16, 17, 18, 19, 20],
  [21, 22, 23, 24, 25, 26, 27],
  [28, 29, 30, '', '', '', ''],
];

const Taskbar = ({ right }) => (
  <TaskbarRoot>
    <TaskSlot><FaWindows size={26} color="#fff" /></TaskSlot>
    {right ? (
      <SearchBox><MagnifierIcon />Escribe aquí para buscar</SearchBox>
    ) : (
      <TaskSlot><MagnifierIcon /></TaskSlot>
    )}
    <TaskSlot><CortanaRing /></TaskSlot>
    <TaskSlot><TaskViewIcon /></TaskSlot>
    <AppSlots />
    {right ? (
      <TaskTray>
        <PlainIcon $w={28} style={{ marginLeft: 115 }}>
          <Hairline w={24} h={28} c="#f0f0f0" sw={1.500} d="M8 13a3 4 0 1 0 .1 0M4 27l3-8M12 27l-3-8M16 2a3.500 4.500 0 1 0 .1 0M14 17l3-7 4 12" />
        </PlainIcon>
        <PlainIcon $w={30} $c="#ffc933" style={{ marginLeft: 100 }}>
          <svg width="24" height="30" viewBox="0 0 24 30"><defs><linearGradient id="sun" x1="0" x2="0" y1="0" y2="1"><stop offset="0" stopColor="#ffe066" /><stop offset="1" stopColor="#f7a81b" /></linearGradient></defs><ellipse cx="12" cy="15" rx="12" ry="15" fill="url(#sun)" /></svg>
        </PlainIcon>
        <span style={{ marginLeft: 8 }}>18°</span>
      </TaskTray>
    ) : (
      <Clock><span>10:35</span><span>09/11/2021</span></Clock>
    )}
  </TaskbarRoot>
);

const ChromeSet = ({ h, r, w, wide, restore }) => (
  <ChromeButtons $h={h} $r={r}>
    <ChromeButton $w={w} $first><Minus size={11} strokeWidth={4} /></ChromeButton>
    <ChromeButton $w={w - 3}>{restore ? <Copy size={11} strokeWidth={3} /> : <Square size={11} strokeWidth={3} />}</ChromeButton>
    <ChromeButton $w={wide}>X</ChromeButton>
  </ChromeButtons>
);

const DiskRow = ({ name }) => (
  <DiskRowWrap $h={97}>
    <DiskLabel>
      <DiskName><DriveIcon />{name}</DiskName>
      <div>Dinámico</div>
      <div>20,00 GB</div>
      <div>En pantalla</div>
    </DiskLabel>
    <DiskParts>
      <RedBar />
      <PartBox>
        <Bold>Raid 1&nbsp; (D:)</Bold>
        <div>20,00 GB NTFS</div>
        <div>Correcto</div>
      </PartBox>
    </DiskParts>
  </DiskRowWrap>
);

const FigDisk = ({ name }) => (
  <FigRow>
    <FigLabel>
      <DiskName><DriveIcon />{name}</DiskName>
      <div>Dinámico</div>
      <div>20,00 GB</div>
      <div>En pantalla</div>
    </FigLabel>
    <FigParts>
      <RedBar $h={11} />
      <FigPart>
        <Bold>Raid 1&nbsp; (D:)</Bold>
        <div>20,00 GB NTFS</div>
        <div>Correcto</div>
      </FigPart>
    </FigParts>
  </FigRow>
);

const BrowserPane = () => (
  <Browser>
    <TabBar>
      <Tab>
        <PlainIcon $c="#35a8e0"><FaWordpress size={20} /></PlainIcon>
        <TabLabel>Cómo hacer un Raid 1 en Windows</TabLabel>
        <X size={14} />
      </Tab>
      <Tab $active>
        <PlainIcon $c="#ccc"><FaGraduationCap size={18} /></PlainIcon>
        <TabLabel>Plataforma de Teleformación de</TabLabel>
        <X size={14} />
      </Tab>
      <NewTab><Plus size={20} strokeWidth={1.400} /></NewTab>
      <WinControls>
        <WinControl><Minus size={15} /></WinControl>
        <WinControl><Copy size={15} /></WinControl>
        <WinControl><X size={18} strokeWidth={1.300} /></WinControl>
      </WinControls>
    </TabBar>
    <NavBar>
      <NavBtns>
        <ArrowLeft size={26} strokeWidth={1.400} />
        <ArrowRight size={26} strokeWidth={1.400} color="#797b90" />
        <RotateCw size={26} strokeWidth={1.600} />
        <Home size={24} strokeWidth={1.600} />
      </NavBtns>
      <UrlField $w={927}>
        <Shield size={23} strokeWidth={1.500} color="#e4e4ea" />
        <PlainIcon $w={24} $c="#e4e4ea"><LockOpen size={22} strokeWidth={1.600} /></PlainIcon>
        <span>aulasvirtuales.<UrlHost>ieslosmanantiales.es</UrlHost></span>
        <EndIcon><Star size={23} strokeWidth={1.400} color="#e4e4ea" /></EndIcon>
      </UrlField>
      <UrlField $w={372} $gap={8}>
        <Search size={21} strokeWidth={1.500} color="#d6d6de" />Buscar
      </UrlField>
      <FfTools>
        <FfTool>
          <HandStop><HandIcon /><HandOver><FaHandPaper size={13} /></HandOver></HandStop>
        </FfTool>
        <FfTool><FaGraduationCap size={20} color="#d9c7a0" /><Badge>1</Badge></FfTool>
        <FfTool>
          <Hairline c="#e8e8ee" w={20} h={24} sw={1.500} d="M2 3h16v9a8 9 0 0 1-16 0zM6 9l4 4 4-4" />
        </FfTool>
        <FfTool>
          <Hairline c="#e8e8ee" w={20} h={26} sw={1.500} d="M2 2v22M7 2v22M11 2v22M14 2l5 22" />
        </FfTool>
        <FfTool><PanelLeft size={24} strokeWidth={1.500} /></FfTool>
        <FfTool>
          <Hairline c="#e8e8ee" w={22} h={26} sw={1.800} d="M2 8V4h18v4zM2 8v15h8M20 8v6M13 16l5 8M16 21a3 3 0 1 0 .1 0" />
        </FfTool>
        <FfTool><Menu size={24} strokeWidth={1.700} /></FfTool>
      </FfTools>
    </NavBar>
    <BookmarksBar>
      <Bookmark $w={211}><W3>W<sup style={{ fontSize: 9 }}>3</sup></W3>How To Create an Ima...</Bookmark>
      <Bookmark $w={200}><Square20 $bg="#f7a91e" $fg="#fff"><FaStackOverflow size={16} /></Square20>Stack Overflow en esp...</Bookmark>
      <Bookmark $w={1100}><Square20 $bg="#6f1ee8" $fg="#fff">B</Square20>Bootstrap</Bookmark>
      <Bookmark $w={60}>
        <span style={{ color: '#31c331', fontSize: 19 }}>✓</span><span style={{ color: '#e01b24', fontSize: 19, marginLeft: -5 }}>♥</span>…
      </Bookmark>
      <Bookmark $w={280}><Globe size={22} strokeWidth={1.300} />FakeUpdate.net - Win...</Bookmark>
      <ChevronsRight size={26} strokeWidth={1.200} />
    </BookmarksBar>
    <WebHeader>
      <X size={38} strokeWidth={3} />
      <HeaderPhone>
        <FaPhoneAlt size={18} style={{ transform: 'scaleX(-1)' }} />
        Teléfono : (000) 123-456
        <FaRegEnvelope size={20} />
      </HeaderPhone>
      <HeaderUser>
        Jiménez Torres
        <PlainIcon $w={44} style={{ marginLeft: 5 }}>
          <svg width="44" height="46" viewBox="0 0 44 46" fill="#9a9a9a"><ellipse cx="22" cy="14" rx="13" ry="14" /><path d="M2 32c0-6 10-7 20-7s20 1 20 7c0 9-9 14-20 14S2 41 2 32z" /></svg>
        </PlainIcon>
        <Caret />
      </HeaderUser>
    </WebHeader>
    <Page>
      <SideCol>
        <SideList>
          {[
            [<FaHome size={21} />, 'Página Principal', false, true],
            [<FaTachometerAlt size={22} />, 'Área personal'],
            [<FaRegCalendarAlt size={20} />, 'Calendario'],
            [<FaRegFile size={20} />, 'Archivos privados'],
            [<FaGraduationCap size={26} />, 'Mis cursos'],
            [<FaGraduationCap size={27} />, '2ASIR.ASGBD.21-22', true],
            [<FaGraduationCap size={27} />, '2ASIR-SRI-21-22.', true],
            [<FaGraduationCap size={27} />, '2ASIR-ASO-21-22', true],
            [<FaGraduationCap size={27} />, '2ASIR-LC-21-22', true],
          ].map(([icon, label, sub, active]) => (
            <SideRow key={label} $sub={sub} $active={active}>
              <PlainIcon $w={30} $c={active ? '#fff' : '#88b77b'}>{icon}</PlainIcon>
              {label}
            </SideRow>
          ))}
        </SideList>
      </SideCol>
      <MainCol>
        <Heading>Mis cursos</Heading>
        <CourseCards>
          <Course>
            <CourseTitle>Administración de Sistemas Gestores de Bases de Datos</CourseTitle>
            <Teacher>Teacher: <Orange>Francisco Javier</Orange></Teacher>
          </Course>
          <Course>
            <CourseTitle>Servicios de Red e Internet</CourseTitle>
            <Teacher>Teacher: <Orange>Francisco Javier</Orange></Teacher>
          </Course>
          <Course>
            <CourseTitle>Administración de Sistemas Operativos</CourseTitle>
            <Teacher $mt={65}>Teacher: <Orange>Rafael</Orange></Teacher>
          </Course>
          <Course>
            <CourseTitle>Implantación de Aplicaciones Web</CourseTitle>
            <Teacher>Teacher: <Orange>Pedro Luis Patón Becerra</Orange></Teacher>
          </Course>
          <Course />
        </CourseCards>
      </MainCol>
      <RightCol>
        <Block $first>
          <BlockHead $h={40} $pad="0 0 0 19px" $lh={16}>Calendario</BlockHead>
          <BlockBody $h={266}>
            <MonthRow><span>«</span><span>noviembre 2021</span><span>»</span></MonthRow>
            <CalGrid>
              {['Dom', 'Lun', 'Mar', 'Mié', 'Jue', 'Vie', 'Sáb'].map(d => <DayCell key={d}>{d}</DayCell>)}
              {months.flat().map((d, i) => (
                <DayCell key={i} $event={[8, 9, 15, 16].includes(d)}>
                  {d === 9 ? <Today>9</Today> : d}
                </DayCell>
              ))}
            </CalGrid>
          </BlockBody>
        </Block>
        <Block>
          <BlockHead $h={95} $pad="19px 170px 0 18px" $lh={28.500}>Usuarios en línea</BlockHead>
          <BlockBody $h={175}>
            <OnlineText>2 usuarios online (últimos 5 minutos)</OnlineText>
            <UserRows>
              <UserRow>
                <FaUser size={18} color="#999" />Pablo Jiménez Torres
                <RowEnd><FaEye size={20} /></RowEnd>
              </UserRow>
              <UserRow><FaUser size={18} color="#999" />Juan Francisco Ramirez Garcia</UserRow>
              <ChatLine><FaComment size={20} /></ChatLine>
            </UserRows>
          </BlockBody>
        </Block>
      </RightCol>
      <PageScroll>
        <ArrowBox $bg="#efefef" $h={20}><ChevronUp size={16} strokeWidth={3} /></ArrowBox>
        <PageThumb />
      </PageScroll>
    </Page>
  </Browser>
);

const VirtualBox = () => (
  <VBoxWindow>
    <VBoxTitle>
      <VmIcon size={20} />
      server [Corriendo] - Oracle VM VirtualBox
      <WinControls $c="#8a8a8a">
        <WinControl><Minus size={15} strokeWidth={1.200} /></WinControl>
        <WinControl><Square size={17} strokeWidth={1.200} style={{ transform: 'scaleX(.7)' }} /></WinControl>
        <WinControl><X size={18} strokeWidth={1.100} /></WinControl>
      </WinControls>
    </VBoxTitle>
    <VBoxMenu>
      <span>Archivo</span><span>Máquina</span><span>Ver</span><span>Entrada</span><span>Dispositivos</span><span>Ayuda</span>
    </VBoxMenu>
    <VmScreen>
      <SmTitle>
        <TitleIcon><ServerToolboxIcon w={18} h={22} /></TitleIcon>
        Administrador del servidor
        <ChromeSet h={20} r={2} w={28} wide={46} restore />
      </SmTitle>
      <SmDark>
        <Hairline w={37} h={38} c="#6f6f6f" sw={2.400} d="M18.500 2a17 17 0 1 0 .1 0M27 19H10M17 11l-8 8 8 8" />
        <Hairline w={26} h={26} c="#6f6f6f" sw={2} d="M13 2a11 11 0 1 0 .1 0M7 13h12M14 8l5 5-5 5" />
        <Crumb>Administrador del servidor • Panel</Crumb>
        <SmMenuEnd>
          <Hairline w={24} h={26} c="#bbb" sw={1.500} d="M12 2a10 10 0 1 0 .1 0" />
          <Hairline w={24} h={26} c="#bbb" sw={3} d="M6 2v22M6 2h14l-6 8" />
          <span>Herramientas</span><span>Ver</span><span>Ayuda</span>
        </SmMenuEnd>
      </SmDark>
      <SmBody>
        <SmSide>
          <SmSideRow $active><Table size={17} />Panel</SmSideRow>
          <SmSideRow><Square size={17} fill="#555" color="#555" />Servidor local</SmSideRow>
          <SmSideRow><Files size={17} color="#555" />Todos los servidores</SmSideRow>
          <SmSideRow><FolderOpen size={17} color="#777" />Servicios de archivos</SmSideRow>
        </SmSide>
        <SmMain>
          <QuickStart>Ocultar</QuickStart>
          <TileRow>
            <TileGutter />
            <Tile $w={235}><div>Rendimiento</div><div>Resultados de BPA</div></Tile>
            <Tile $w={236}><div>Servicios</div><div>Rendimiento</div><div>Resultados de BPA</div></Tile>
          </TileRow>
        </SmMain>
        <SmScroll>
          <ArrowBox $h={17}><ChevronUp size={13} /></ArrowBox>
          <SmThumb><Menu size={11} /></SmThumb>
          <ArrowBox $h={16} $b="1px solid #bbb"><ChevronDown size={13} /></ArrowBox>
        </SmScroll>
      </SmBody>
      <VmTaskbar>
        <VmSlot $w={52}><FaWindows /></VmSlot>
        <VmSlot $w={59} $on><ServerToolboxIcon /></VmSlot>
        <VmSlot $w={64}>
          <svg width="24" height="28" viewBox="0 0 24 28"><path d="M6 2h17l-5 24H1z" fill="#1b6bb8" stroke="#cfe8f5" /><path d="M8 8l7 6-9 6" stroke="#fff" strokeWidth="2" fill="none" /></svg>
        </VmSlot>
        <VmSlot $w={62}>
          <svg width="32" height="30" viewBox="0 0 32 30"><path d="M1 4h11l3 3h16v22H1z" fill="#f9e08f" stroke="#d8b44a" /><rect x="6" y="17" width="20" height="12" fill="#6fb6e6" stroke="#fff" /></svg>
        </VmSlot>
        <VmSlot $w={59} $on>
          <svg width="34" height="34" viewBox="0 0 34 34"><path d="M8 14L22 2l10 6-12 12z" fill="#9aa0a4" /><path d="M6 16h18v16H6z" fill="#6d7377" /><circle cx="16" cy="12" r="3" fill="#4caf50" /></svg>
        </VmSlot>
        <VmTray>
          <TrayFlag />
          <Hairline w={18} h={24} c="#fff" sw={1.400} d="M5 4h8v18H5zM2 4v8M16 4v8" />
          <Hairline w={18} h={24} c="#fff" sw={1.400} d="M3 3h12v10H3zM9 13v8M4 21h10" />
          <TrayFlag />
          <VmClock><span>10:35</span><span>09/11/2021</span></VmClock>
        </VmTray>
      </VmTaskbar>
      <DiskWindow>
        <DiskTitle>
          <TitleIcon style={{ left: 2, top: 8 }}><DriveIcon /></TitleIcon>
          Administración de discos
          <ChromeSet h={22} r={-1} w={29} wide={46} />
        </DiskTitle>
        <DiskMenu>
          <span>Archivo</span><span>Acción</span><span>Ver</span><span>Ayuda</span>
        </DiskMenu>
        <DiskTools>
          <ArrowLeft size={18} strokeWidth={3.400} color="#a5a5a5" />
          <ArrowRight size={18} strokeWidth={3.400} color="#a5a5a5" />
          <ToolSep />
          <Table size={18} color="#7e8f9e" />
          <ToolSep />
          <Btn $w={15} $c="#fff"><Square20 $bg="#2443b5" $fg="#fff">?</Square20></Btn>
          <Table size={18} color="#7e8f9e" style={{ marginLeft: 4 }} />
          <ToolSep />
          <RefreshCw size={18} color="#2b8a2b" />
          <FileCode size={18} color="#222" />
        </DiskTools>
        <VolumeList>
          <VolumeGrid $head $h={19}>
            {['Volumen', 'Distribución', 'Tipo', 'Sistema de ...', 'Estado', 'Capacidad', 'Espacio ...', '% disponible'].map(c => (
              <VolHead key={c}>{c}</VolHead>
            ))}
          </VolumeGrid>
          {[
            [false, '(C:)', 'Simple', 'Básico', 'NTFS', 'Correcto (...', '19,66 GB', '9,95 GB', '51 %'],
            [true, 'Raid 1 (D:)', 'Reflejar i...', 'Dinámico', 'NTFS', 'Correcto', '20,00 GB', '19,93 GB', '100 %'],
            [false, 'Reservado para el ...', 'Simple', 'Básico', 'NTFS', 'Correcto (...', '350 MB', '71 MB', '20 %'],
          ].map(([blue, name, ...rest]) => (
            <VolumeGrid key={name} $h={17}>
              <VolCell $first><DriveIcon blue={blue} /><VolName $sel={blue}>{name}</VolName></VolCell>
              {rest.map((c, i) => <VolCell key={i}>{c}</VolCell>)}
            </VolumeGrid>
          ))}
        </VolumeList>
        <DiskStack>
          <DiskRows>
            <DiskRow name="Disco 1" />
            <DiskRow name="Disco 2" />
            <DiskRowWrap $h={56}>
              <DiskLabel>
                <DiskName><DriveIcon />CD-ROM 0</DiskName>
                <div>CD-ROM (E:)</div>
              </DiskLabel>
            </DiskRowWrap>
          </DiskRows>
          <DiskScroll>
            <ArrowBox $h={20} $b="1px solid #ccc"><ChevronUp size={12} /></ArrowBox>
            <ArrowBox $h={36} />
            <ArrowBox $h={134} $bg="#dcdcdc" $b="1px solid #bdbdbd"><Menu size={11} /></ArrowBox>
            <ArrowBox $h={46} />
            <ArrowBox $h={16} $b="1px solid #ccc"><ChevronDown size={12} /></ArrowBox>
          </DiskScroll>
        </DiskStack>
        <LegendBar>
          <Swatch $c="#000" /><span>No asignado</span>
          <Swatch $c="#000080" /><span>Partición primaria</span>
          <Swatch $c="#800000" /><span>Volumen reflejado</span>
        </LegendBar>
        <DiskStatusBar>
          <DiskStatusCell /><DiskStatusCell /><span />
        </DiskStatusBar>
        <Dialog>
          <DialogTitle>
            Cambiar la letra y rutas de acceso de unidad para ...
            <DialogClose>X</DialogClose>
          </DialogTitle>
          <DialogBody>
            <div>Permitir el acceso a este volumen utilizando la letra de unidad y rutas<br />siguientes:</div>
            <DialogList><DriveIcon blue />D:</DialogList>
            <DialogButtons $mt={13}>
              <WinButton>Agregar...</WinButton>
              <WinButton $focus>Cambiar...</WinButton>
              <WinButton>Quitar</WinButton>
            </DialogButtons>
            <DialogButtons $end $mt={18}>
              <WinButton>Aceptar</WinButton>
              <WinButton>Cancelar</WinButton>
            </DialogButtons>
          </DialogBody>
        </Dialog>
      </DiskWindow>
      <CursorMark $x={987} $y={492}><Cursor /></CursorMark>
    </VmScreen>
    <VBoxStatus>
      <VBoxStatusIcons />
      <StatusText>CTRL DERECHA</StatusText>
    </VBoxStatus>
  </VBoxWindow>
);

const row1 = [
  [FileText, '#1a6fb5'], 'c', [FolderOpen, '#e69a1f', '#fbd67d'], 'c', [Save, '#9a3fa6'], 'c', '|',
  [FileType, '#444'], [Printer, '#444'], [FileSearch, '#444'], '|',
  [Scissors, '#b9b9b9'], [Files, '#b9b9b9'], [ClipboardPaste, '#444'], 'c', '|',
  [Paintbrush, '#e69a1f'], '|', [Undo2, '#2a86cf'], 'c', [Redo2, '#c4c4c4'], 'c', '|',
  [SearchCheck, '#444'], [SpellCheck, '#3a9e4a'], [Pilcrow, '#444'], '|',
  [Table, '#444'], 'c', [Image, '#2a86cf'], [ChartColumn, '#e69a1f'], [TextSelect, '#444'], '|',
  [SeparatorHorizontal, '#c93434'], [FileCode, '#444'], 'c', [Omega, '#444'], 'c', '|',
  [Link, '#444'], [File, '#444'], [Files, '#444'], [File, '#2a86cf'], [Files, '#c93434'], '|',
  [MessageSquare, '#444'], [FilePen, '#e69a1f'], '|', [Hairline, 'line'], [Diamond, '#555'], 'c', [Shapes, '#555'],
];

const ToolbarOne = () => (
  <ToolRow $h={42} $pad={3}>
    {row1.map((item, i) => {
      if (item === 'c') return <Drop key={i} />;
      if (item === '|') return <TSep key={i} />;
      const [Icon, color, fill] = item;
      if (color === 'line') return <Btn key={i}><Hairline w={24} h={34} c="#2a86cf" d="M2 1l20 32" /></Btn>;
      return <Btn key={i} $c={color}><Icon size={28} strokeWidth={1.200} fill={fill || 'none'} /></Btn>;
    })}
  </ToolRow>
);

const ToolbarTwo = () => (
  <ToolRow $h={33} $pad={4}>
    <Combo $w={180}><ComboText>Estilo de párrafo predet</ComboText><ComboArrow><ChevronDown size={14} /></ComboArrow></Combo>
    <Btn $c="#2a86cf"><RefreshCw size={22} strokeWidth={1.300} /></Btn>
    <Btn $c="#e69a1f"><Sparkles size={22} strokeWidth={1.300} /></Btn>
    <TSep $w={8} />
    <Combo $w={180}><ComboText>Calibri</ComboText><ComboArrow><ChevronDown size={14} /></ComboArrow></Combo>
    <TSep $w={8} />
    <Combo $w={75}><ComboText>11 pt</ComboText><ComboArrow><ChevronDown size={14} /></ComboArrow></Combo>
    <TSep $w={8} />
    <Btn><FormatLetter $s={30} $w={700}>N</FormatLetter></Btn>
    <Btn><FormatLetter $s={28} $i>K</FormatLetter></Btn>
    <Btn><FormatLetter $s={25} $d="underline">S</FormatLetter></Btn>
    <Btn><FormatLetter $s={25} $d="line-through">S</FormatLetter></Btn>
    <TSep $w={8} />
    <Btn><FormatLetter $s={25}>X</FormatLetter><Script $up>2</Script></Btn>
    <Btn><FormatLetter $s={25}>X</FormatLetter><Script>2</Script></Btn>
    <TSep $w={8} />
    <Btn><FormatLetter $s={26} $i>A</FormatLetter></Btn>
    <TSep $w={8} />
    <Btn><ColorA $s={26}>A<ColorBar $c="#c9211e" /></ColorA></Btn>
    <Drop />
    <Btn><ColorA $s={18} $fg="#e69a1f">ab<ColorBar $c="#ffff00" /></ColorA></Btn>
    <Drop />
    <TSep $w={5} />
    <Btn $w={31} $on><Lines rows={[[0, 18], [0, 12], [0, 18], [0, 12]]} /></Btn>
    <Btn $ml={2}><Lines rows={[[0, 18], [3, 15], [0, 18], [3, 15]]} /></Btn>
    <Btn><Lines rows={[[0, 18], [6, 18], [0, 18], [6, 18]]} /></Btn>
    <Btn><Lines rows={[[0, 18], [0, 18], [0, 18], [0, 18]]} /></Btn>
    <TSep $w={7} />
    <Btn $w={31} $on><ListIcon /></Btn>
    <Drop $on />
    <Btn><ListIcon numbered /></Btn>
    <Drop />
    <TSep $w={7} />
    <Btn><Hairline w={24} h={28} c="#2a86cf" sw={1.500} d="M1 14h10M7 9l5 5-5 5" /></Btn>
    <Btn><Hairline w={24} h={28} c="#c4c4c4" sw={1.500} d="M22 14H10M15 9l-5 5 5 5M2 3h20M2 25h20" /></Btn>
    <TSep $w={5} />
    <Btn><ArrowLines dir="spread" /></Btn>
    <Drop />
    <Btn $ml={1}><ArrowLines dir="spread" /></Btn>
    <Btn><ArrowLines /></Btn>
  </ToolRow>
);

const WriterPane = () => (
  <Writer>
    <WriterTitle>
      <PlainIcon $w={14}><WriterIcon /></PlainIcon>
      <span style={{ marginLeft: 4 }}>Actividades_Tema_4.docx - LibreOffice Writer</span>
      <WinControls $c="#fff">
        <WinControl><Minus size={15} /></WinControl>
        <WinControl><Copy size={15} /></WinControl>
        <WinControl style={{ marginRight: 3 }}><X size={20} strokeWidth={1.400} /></WinControl>
      </WinControls>
    </WriterTitle>
    <WriterMenu>
      <span><Mnemonic>A</Mnemonic>rchivo</span>
      <span><Mnemonic>E</Mnemonic>ditar</span>
      <span><Mnemonic>V</Mnemonic>er</span>
      <span><Mnemonic>I</Mnemonic>nsertar</span>
      <span><Mnemonic>F</Mnemonic>ormato</span>
      <span>E<Mnemonic>s</Mnemonic>tilos</span>
      <span><Mnemonic>T</Mnemonic>abla</span>
      <span>Formu<Mnemonic>l</Mnemonic>ario</span>
      <span><Mnemonic>H</Mnemonic>erramientas</span>
      <span>Ve<Mnemonic>n</Mnemonic>tana</span>
      <span>Ay<Mnemonic>u</Mnemonic>da</span>
      <MenuEnd><Globe size={20} strokeWidth={1.200} />X</MenuEnd>
    </WriterMenu>
    <ToolbarBlock>
      <ToolbarOne />
      <ToolbarTwo />
    </ToolbarBlock>
    <DocArea>
      <DocScrollPane>
        <TabMark />
        <Ruler>
          {Sp.map((n, i) => <RulerCell key={i} $first={i === 0}>{n === 0 || i === 21 ? '' : n}</RulerCell>)}
          <RulerMark $x={172} $y={-1}><Triangle size={13} fill="#ddd" style={{ transform: 'rotate(180deg)' }} /></RulerMark>
          <RulerMark $x={196} $y={8}><Triangle size={13} fill="#ddd" /></RulerMark>
          <RulerMark $x={844} $y={8}><Triangle size={13} fill="#ddd" /></RulerMark>
        </Ruler>
        <DocPage>
          <FigureOne>
            <FigLine />
            <FigDisk name="Disco 1" />
            <FigDisk name="Disco 2" />
          </FigureOne>
          <Para $mt={65}>1.17 <Misspelled>Asígnale</Misspelled> al sistema RAID la etiqueta Datos.</Para>
          <BulletPara>
            Para esto haremos clic derecho sobre la unidad y <Misspelled>clicaremso</Misspelled> sobre cambiar letra y ruta<br />
            de acceso a la unidad.
          </BulletPara>
          <FigureTwo>
            <FigVolRow><FigVolName><DriveIcon />&nbsp;(C:)</FigVolName><span>Simple</span><span>Básico</span><span>NTFS</span><span>Correcto (...</span><span>19,66 G</span></FigVolRow>
            <FigVolRow><FigVolName><DriveIcon blue /><SelName>Raid 1 (D:)</SelName></FigVolName><span /><span /><span /><span /><span>20,00 G</span></FigVolRow>
            <FigVolRow><FigVolName><DriveIcon />Reservado</FigVolName><span /><span /><span /><span /><span>350 ME</span></FigVolRow>
            <FigBottomLine />
            <ContextMenu>
              <ContextGutter />
              <ContextItem $h={24}>Abrir</ContextItem>
              <ContextItem>Explorar</ContextItem>
              <ContextSep $m="2px 0" />
              <ContextItem $h={21}>Quitar reflejo...</ContextItem>
              <ContextItem>Romper volumen reflejado...</ContextItem>
              <ContextSep />
              <ContextItem $on>Cambiar la letra y rutas de acceso de unidad...</ContextItem>
              <ContextItem>Formatear...</ContextItem>
              <ContextSep />
            </ContextMenu>
            <CursorMark $x={228} $y={132}><Cursor /></CursorMark>
          </FigureTwo>
          <DocCaret />
          <Para $mt={65}>ACTIVIDADES 4.6</Para>
          <Para $mt={17}>1.18 Active las cuotas de disco, en el disco duro de datos, para que los usuarios empleado1 y</Para>
          <Para>empleado2 tengan un espacio de 10 <Misspelled>MB</Misspelled> de espacio en disco.</Para>
          <Para $mt={16}>1.19 Accede al sistema con el usuario empleado1 y copia datos en el disco duro de datos para</Para>
        </DocPage>
      </DocScrollPane>
      <DocScrollbar>
        <ChevronUp size={15} strokeWidth={2.500} color="#333" />
        <DocThumb />
        <ChevronDown size={15} strokeWidth={2.500} color="#555" style={{ marginTop: 'auto', marginBottom: 5 }} />
      </DocScrollbar>
      <SidePanel>
        <PanelDots />
        <PanelDivider />
        <PanelIcon><Table size={26} strokeWidth={1.300} /></PanelIcon>
        <PanelIcon><File size={26} strokeWidth={1.300} /></PanelIcon>
        <PanelIcon $c="#2a86cf"><FormatLetter $s={28} $i>A</FormatLetter></PanelIcon>
        <PanelIcon $c="#e69a1f"><Image size={26} strokeWidth={1.300} /></PanelIcon>
        <PanelIcon $c="#2a86cf"><Search size={26} strokeWidth={1.300} /></PanelIcon>
      </SidePanel>
    </DocArea>
    <ToolbarBlock>
      <ToolRow $h={39} $pad={4.500}>
        <Btn><BlueArrow d="M1 12h18M13 6l6 6-6 6" /></Btn>
        <Btn><BlueArrow c="#c9c9c9" d="M21 12H3M9 6l-6 6 6 6" /></Btn>
        <Btn><BlueArrow d="M1 8h16M12 3l5 5-5 5M1 16h16M12 11l5 5-5 5" /></Btn>
        <Btn><BlueArrow c="#c9c9c9" d="M21 8H5M10 3L5 8l5 5M21 16H5M10 11l-5 5 5 5" /></Btn>
        <TSep $w={7} />
        <Btn><BlueArrow d="M11 1v20M5 15l6 6 6-6" /></Btn>
        <Btn><BlueArrow d="M11 23V3M5 9l6-6 6 6" /></Btn>
        <Btn><BlueArrow d="M8 1v20M3 16l5 5 5-5M15 1v14M11 11l4 4 4-4" /></Btn>
        <Btn><BlueArrow d="M8 23V3M3 8l5-5 5 5M15 23V9M11 13l4-4 4 4" /></Btn>
        <TSep $w={7} />
        <Btn><Lines rows={[[4, 18], [4, 14], [4, 18], [8, 18]]} color="#555" /></Btn>
        <Btn><Lines rows={[[4, 18], [8, 18], [4, 18], [4, 14]]} color="#555" /></Btn>
        <TSep $w={7} />
        <Btn><ListIcon /></Btn>
      </ToolRow>
      <ToolRow $h={36} $pad={4.500}>
        <Btn $c="#e05a5a"><XCircle size={24} fill="#f19a9a" strokeWidth={1.400} color="#c73a3a" /></Btn>
        <Combo $w={249}><ComboText $c="#8c8c8c">Buscar</ComboText><ComboArrow><ChevronDown size={14} /></ComboArrow></Combo>
        <Btn $ml={1}><Hairline c="#bbb" d="M1 19L11 5l10 14" /></Btn>
        <Btn><Hairline c="#bbb" d="M1 5l10 14 10-14" /></Btn>
        <GreyLabel>Buscar todo</GreyLabel>
        <CheckLabel><CheckBox />Distinguir mayúsculas y minúsculas</CheckLabel>
        <TSep $w={12} />
        <Btn><SearchCheck size={26} strokeWidth={1.200} /></Btn>
        <Combo $w={149}>
          <ComboText><File size={18} strokeWidth={1.200} />Página</ComboText>
          <ComboArrow><ChevronDown size={14} /></ComboArrow>
        </Combo>
        <Btn $ml={1}><Hairline c="#444" d="M1 19L11 5l10 14" /></Btn>
        <Btn><Hairline c="#444" d="M1 5l10 14 10-14" /></Btn>
      </ToolRow>
    </ToolbarBlock>
    <StatusBar>
      <StatusCell>Página 8 de 9</StatusCell>
      <StatusCell>811 palabras, 4.670 caracteres</StatusCell>
      <StatusCell>Estilo de página predeterminado</StatusCell>
      <StatusCell $pad={58}>Español (España)</StatusCell>
      <StatusCell />
      <StatusCell $center><Hairline w={18} h={16} c="#555" d="M1 4h8v8H1zM14 1v14M12 1h4M12 15h4" /></StatusCell>
      <StatusCell $center><Hairline w={12} h={18} c="#e02020" sw={1.400} d="M2 1h8v7H2zM2 10h8v7H2z" /></StatusCell>
      <StatusCell />
      <StatusCell $center>Nivel 1</StatusCell>
      <StatusCell />
      <StatusCell />
    </StatusBar>
    <Taskbar right />
    <Lightshot>
      <FaFeatherAlt size={28} color="#9a6fd8" />Lightshot
    </Lightshot>
  </Writer>
);

export default function App() {
  return (
    <>
      <Global />
      <Desktop>
        <Screen>
          <BrowserPane />
          <Taskbar />
          <VirtualBox />
        </Screen>
        <Screen>
          <WriterPane />
        </Screen>
      </Desktop>
    </>
  );
}
